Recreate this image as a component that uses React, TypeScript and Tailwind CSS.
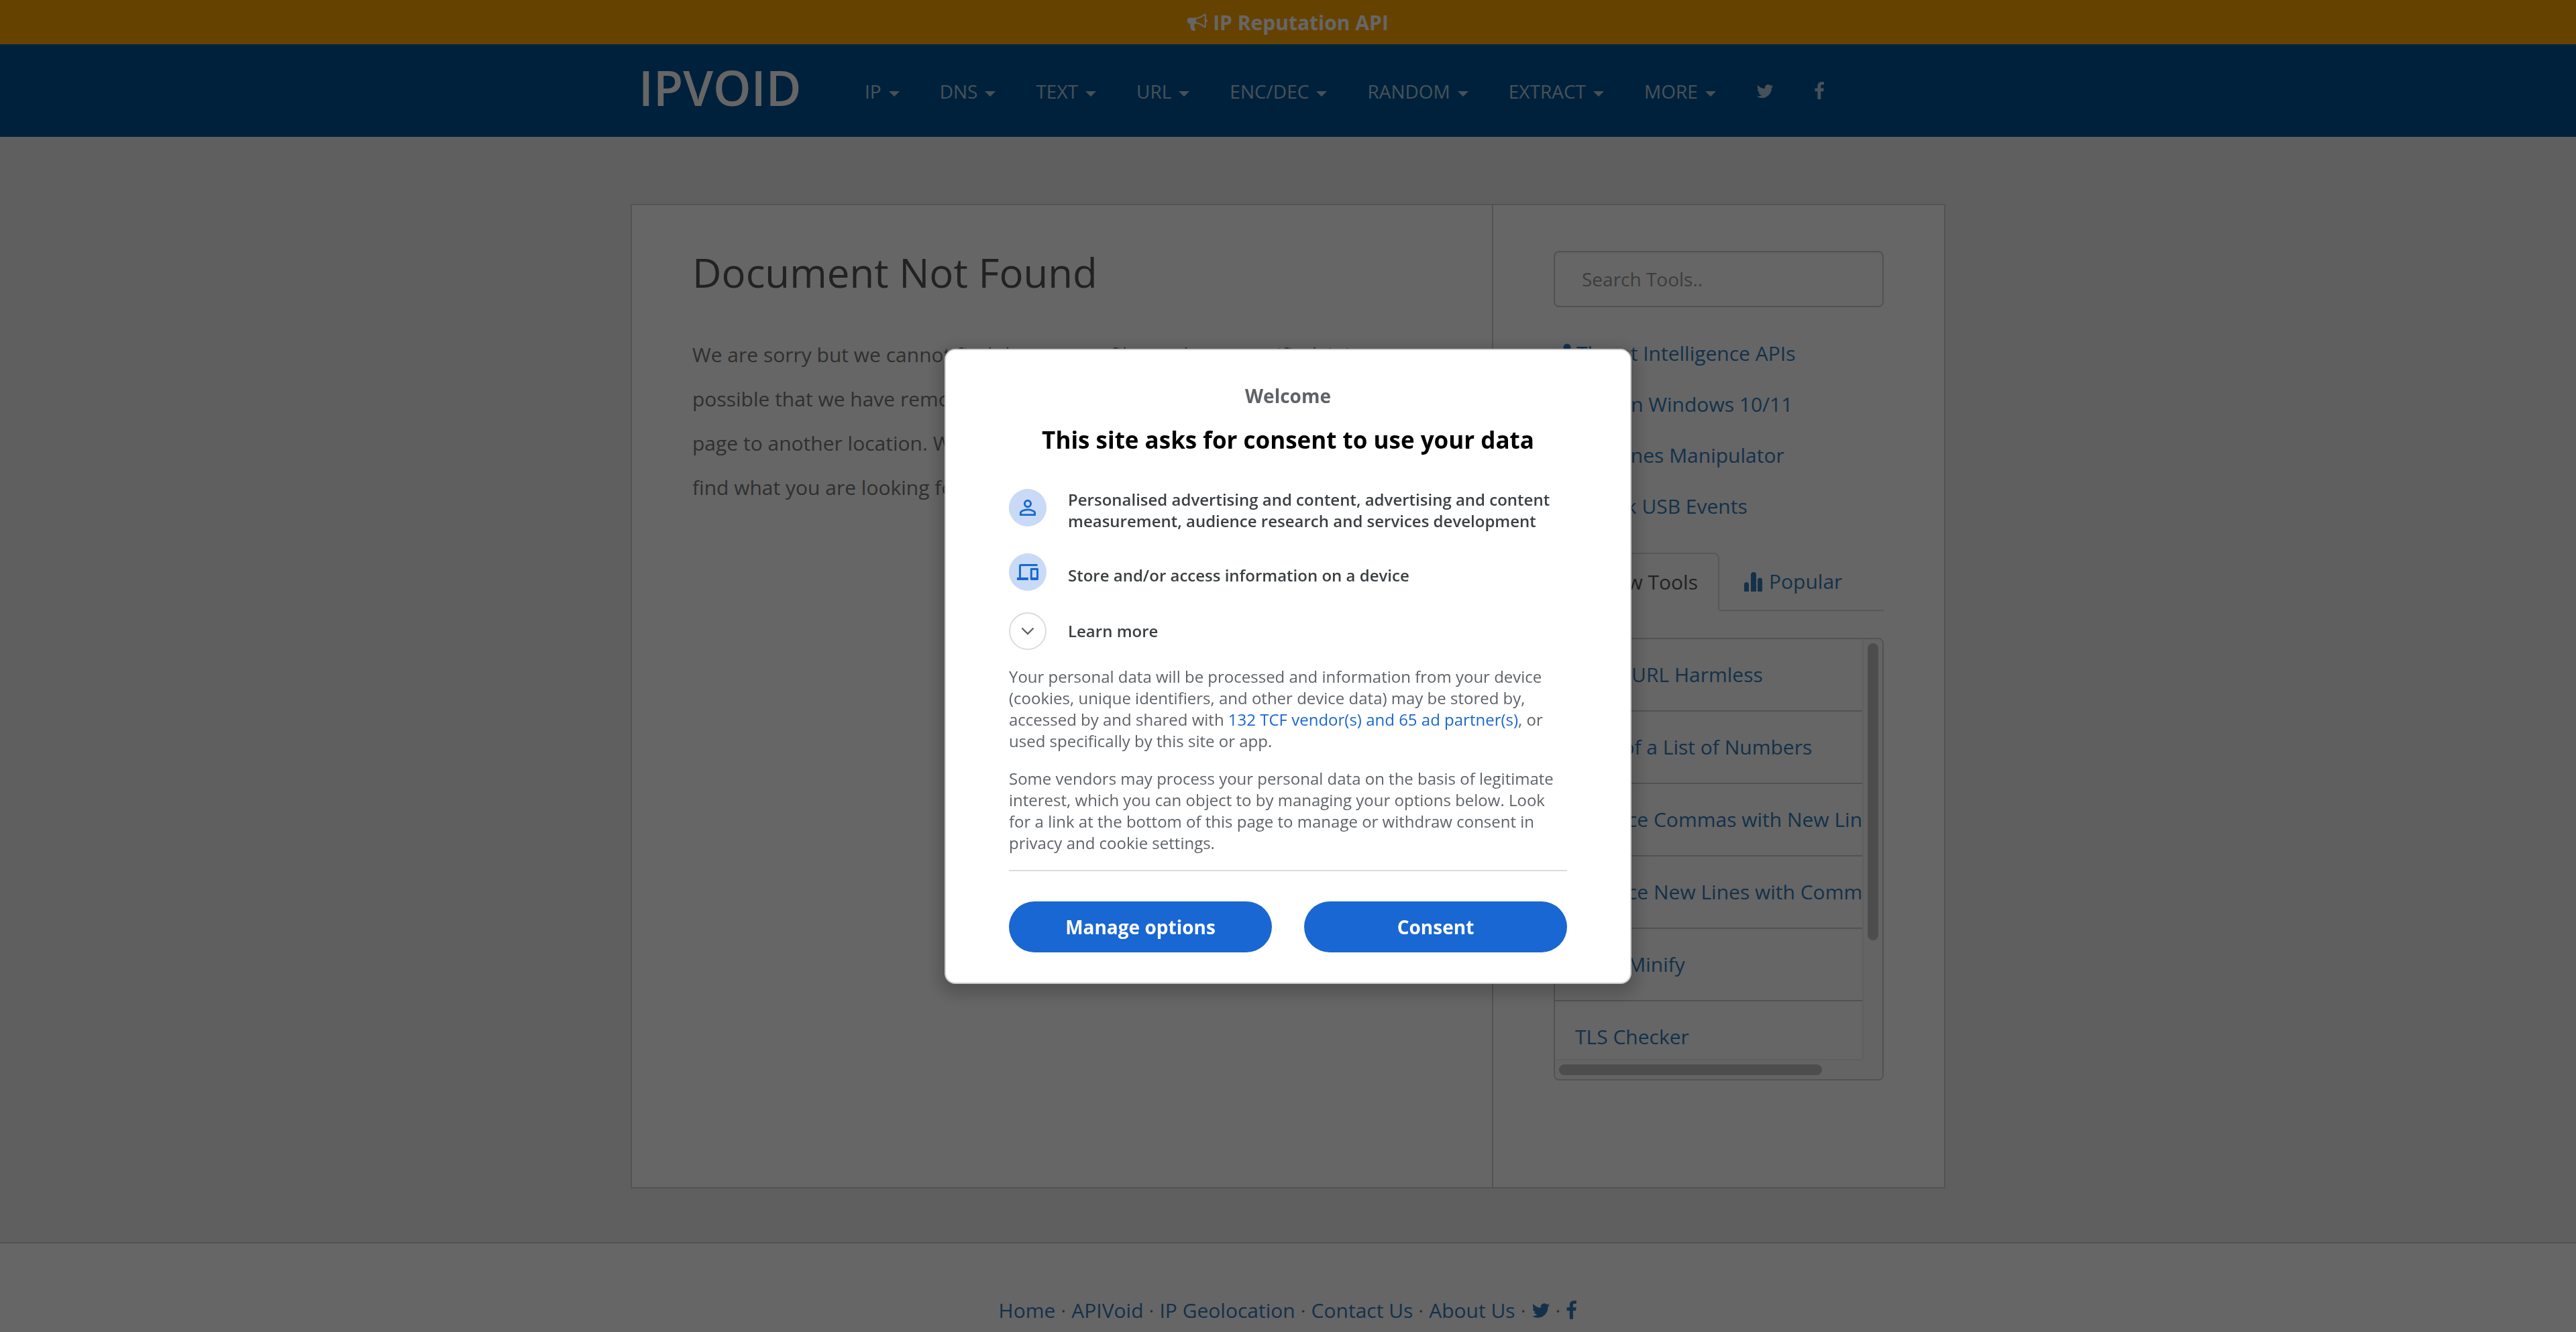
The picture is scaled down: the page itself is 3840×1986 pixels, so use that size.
import React from "react";

const nav = ["IP", "DNS", "TEXT", "URL", "ENC/DEC", "RANDOM", "EXTRACT", "MORE"];
const featured = [
  { label: "Run on Windows 10/11", gap: "ml-[34px]" },
  { label: "Text Lines Manipulator", gap: "ml-6" },
  { label: "Track USB Events", gap: "ml-12" },
];
const tools = [
  "Make URL Harmless",
  "Sum of a List of Numbers",
  "Replace Commas with New Lines",
  "Replace New Lines with Commas",
  "JSON Minify",
  "TLS Checker",
];
const footerLinks = ["Home", "APIVoid", "IP Geolocation", "Contact Us", "About Us"];

function Bullhorn() {
  return (
    <svg viewBox="0 0 1792 1792" className="size-[30px]" fill="currentColor" aria-hidden="true">
      <path d="M1664 640q53 0 90.500 37.500t37.500 90.500-37.500 90.500-90.500 37.500v384q0 52-38 90t-90 38q-417-347-812-380-58 19-91 66t-31 100.500 40 92.500q-20 33-23 65.500t6 58 33.500 55 48 50 61.500 50.500q-29 58-111.500 83t-168.500 11.500-132-55.500q-7-23-29.500-87.500t-32-94.500-23-89-15-101 3.500-98.500 22-110.500h-122q-66 0-113-47t-47-113v-192q0-66 47-113t113-47h480q435 0 896-384 52 0 90 38t38 90v384zm-128 604v-954q-394 302-768 343v270q377 42 768 341z" />
    </svg>
  );
}

function Twitter({ className }: { className: string }) {
  return (
    <svg viewBox="64 0 1664 1792" className={className} fill="currentColor" aria-hidden="true">
      <path d="M1684 408q-67 98-162 167 1 14 1 42 0 130-38 259.500t-115.500 248.500-184.500 210.500-258 146-323 54.500q-271 0-496-145 35 4 78 4 225 0 401-138-105-2-188-64.500t-114-159.500q33 5 61 5 43 0 85-11-112-23-185.500-111.500t-73.500-205.500v-4q68 38 146 41-66-44-105-115t-39-154q0-88 44-163 121 149 294.500 238.500t371.500 99.500q-8-38-8-74 0-134 94.500-228.500t228.500-94.500q140 0 236 102 109-21 205-78-37 115-142 178 93-10 186-50z" />
    </svg>
  );
}

function Facebook({ className }: { className: string }) {
  return (
    <svg viewBox="384 0 1024 1792" className={className} fill="currentColor" aria-hidden="true">
      <path d="M1343 12v264h-157q-86 0-116 36t-30 108v189h293l-39 296h-254v759h-306v-759h-255v-296h255v-218q0-186 104-288.500t277-102.500q147 0 228 12z" />
    </svg>
  );
}

function Pin() {
  return (
    <svg viewBox="0 0 26 30" className="inline h-[30px] w-[26px]" fill="currentColor" aria-hidden="true">
      <circle cx="20" cy="6" r="5.500" />
      <path d="M19 11h2v16l-1 3-1-3z" />
    </svg>
  );
}

function Bars() {
  return (
    <svg viewBox="0 0 32 30" className="h-[30px] w-8" fill="currentColor" aria-hidden="true">
      <path d="M3 30V19.500a3.500 3.500 0 0 1 7 0V30zM13 30V5a3.500 3.500 0 0 1 8 0v25zM23 30V13a3.500 3.500 0 0 1 7 0v17z" />
    </svg>
  );
}

function Plus() {
  return (
    <svg viewBox="0 0 30 30" className="size-[30px]" fill="none" stroke="currentColor" strokeWidth="4" aria-hidden="true">
      <path d="M15 4v22M4 15h22" />
    </svg>
  );
}

function Person() {
  return (
    <svg viewBox="0 0 24 24" className="size-9" fill="currentColor" aria-hidden="true">
      <path d="M12 5.900a2.100 2.100 0 1 1 0 4.200 2.100 2.100 0 0 1 0-4.200m0 9c2.970 0 6.100 1.460 6.100 2.100v1.100H5.900V17c0-.64 3.130-2.100 6.100-2.100M12 4C9.790 4 8 5.790 8 8s1.790 4 4 4 4-1.790 4-4-1.790-4-4-4zm0 9c-2.670 0-8 1.340-8 4v3h16v-3c0-2.660-5.330-4-8-4z" />
    </svg>
  );
}

function Devices() {
  return (
    <svg viewBox="0 0 21.5 16" className="h-6 w-8" fill="currentColor" fillRule="evenodd" aria-hidden="true">
      <path d="M0 13.300h2V2a2 2 0 0 1 2-2h16.500v2H4v11.300h7.300V16H0z" />
      <path d="M14.300 4h6.200a1 1 0 0 1 1 1v10a1 1 0 0 1-1 1h-6.200a1 1 0 0 1-1-1V5a1 1 0 0 1 1-1zm1 2v7.300h4.200V6z" />
    </svg>
  );
}

function Chevron() {
  return (
    <svg viewBox="0 0 20 12" className="h-3 w-5" fill="none" stroke="#5f6368" strokeWidth="2.400" aria-hidden="true">
      <path d="M1.500 1.500 10 10l8.500-8.500" />
    </svg>
  );
}

export default function App() {
  return (
    <div className="min-h-screen bg-[#eee] font-['Open_Sans',sans-serif] text-[28px] text-[#777]">
      <a href="#" className="flex h-[66px] items-center justify-center gap-2 bg-[#ffa500] text-[30px] font-bold text-white">
        <Bullhorn />
        IP Reputation API
      </a>
      <header className="border-t-2 border-[#00639f] bg-[#005397]">
        <div className="mx-auto flex h-[136px] w-full max-w-[1960px] items-center">
          <a href="#" className="ml-3 w-[307px] pb-3 text-[72px] leading-none font-semibold text-white">
            IPVOID
          </a>
          <nav className="flex items-center text-[#b0ccdc]">
            {nav.map((n) => (
              <a key={n} href="#" className="flex items-center gap-[11px] px-[30px]">
                {n}
                <span className="mt-2 border-x-8 border-t-8 border-x-transparent border-t-current" />
              </a>
            ))}
            <a href="#" aria-label="Twitter" className="px-[30px]">
              <Twitter className="h-7 w-[26px]" />
            </a>
            <a href="#" aria-label="Facebook" className="px-[30px]">
              <Facebook className="h-7 w-4" />
            </a>
          </nav>
        </div>
      </header>

      <main className="mx-auto mt-[100px] flex min-h-[1468px] w-full max-w-[1960px] border-2 border-[#d0d0d0] bg-white">
        <section className="flex-1 px-[90px] pt-[58px]">
          <h1 className="text-[60px] leading-[84px] text-[#555]">Document Not Found</h1>
          <p className="mt-12 text-[30px] leading-[66px]">
            We are sorry but we cannot find the page or file you have specified, it is
            <br />
            possible that we have removed the page from our website, or moved the
            <br />
            page to another location. We hope that the links on this page help you to
            <br />
            find what you are looking for.
          </p>
        </section>

        <aside className="w-[674px] border-l-2 border-[#d0d0d0] px-[90px] pt-[68px] text-[30px] text-[#337ab7]">
          <input
            aria-label="Search tools"
            placeholder="Search Tools.."
            className="h-[84px] w-full rounded-lg border-2 border-[#ccc] px-10 text-[28px] shadow-inner placeholder:text-[#999]"
          />
          <ul className="mt-[31px] leading-[76px]">
            <li>
              <a href="#" className="flex items-center gap-2">
                <Pin />
                Threat Intelligence APIs
              </a>
            </li>
            {featured.map((f) => (
              <li key={f.label}>
                <a href="#" className={f.gap}>
                  {f.label}
                </a>
              </li>
            ))}
          </ul>

          <div role="tablist" className="mt-[31px] flex border-b-2 border-[#ddd]">
            <button
              role="tab"
              aria-selected="true"
              className="-mb-0.5 flex h-[87px] items-center gap-2 rounded-t-lg border-2 border-[#ddd] border-b-white bg-white px-[30px] text-[#555]"
            >
              <Plus />
              New Tools
            </button>
            <button role="tab" aria-selected="false" className="ml-1 flex items-center gap-2 px-[30px]">
              <Bars />
              Popular
            </button>
          </div>

          <div className="mt-10 grid h-[660px] grid-cols-[minmax(0,1fr)_30px] grid-rows-[minmax(0,1fr)_30px] overflow-hidden rounded-lg border-2 border-[#ccc]">
            <ul className="overflow-hidden whitespace-nowrap">
              {tools.map((t) => (
                <li key={t} className="flex h-[108px] items-center border-b-2 border-[#ccc] px-[30px] pb-0.5">
                  <a href="#">{t}</a>
                </li>
              ))}
            </ul>
            <div className="border-l-2 border-[#ededed] bg-[#fafafa] px-1.5 pt-1.5">
              <div className="h-[443px] rounded-full bg-[#c1c1c1]" />
            </div>
            <div className="border-t-2 border-[#ededed] bg-[#fafafa] px-1.5 pt-1.5">
              <div className="h-4 w-[392px] rounded-full bg-[#c1c1c1]" />
            </div>
            <div className="bg-[#fafafa]" />
          </div>
        </aside>
      </main>

      <footer className="mt-20 flex items-center justify-center gap-2 border-t-2 border-[#ccc] bg-white pt-20 pb-10 text-[30px] leading-10 text-[#337ab7]">
        {footerLinks.map((f) => (
          <React.Fragment key={f}>
            <a href="#">{f}</a>
            <span className="text-[#777]">·</span>
          </React.Fragment>
        ))}
        <a href="#" aria-label="Twitter">
          <Twitter className="h-[30px] w-7" />
        </a>
        <span className="text-[#777]">·</span>
        <a href="#" aria-label="Facebook">
          <Facebook className="h-[30px] w-[17px]" />
        </a>
      </footer>

      <div className="fixed inset-0 z-10 flex items-center justify-center bg-black/60">
        <div
          role="dialog"
          aria-modal="true"
          aria-labelledby="consent-title"
          className="w-[1024px] rounded-2xl border-2 border-[#ccc] bg-white px-[94px] pt-12 pb-[45px] text-[24px] leading-8 text-[#5f6368] shadow-[0_8px_24px_8px_rgba(0,0,0,0.2)]"
        >
          <p className="text-center text-[28px] leading-10 font-bold">Welcome</p>
          <h2 id="consent-title" className="mt-[22px] text-center text-[35px] leading-[48px] font-bold text-black">
            This site asks for consent to use your data
          </h2>

          <ul className="mt-[49px] flex flex-col gap-8 font-semibold text-[#3c4043]">
            <li className="flex gap-8">
              <span className="flex size-14 shrink-0 items-center justify-center rounded-full bg-[#c8daf5] text-[#1967d2]">
                <Person />
              </span>
              <span>Personalised advertising and content, advertising and content measurement, audience research and services development</span>
            </li>
            <li className="flex gap-8">
              <span className="flex size-14 shrink-0 items-center justify-center rounded-full bg-[#c8daf5] text-[#1967d2]">
                <Devices />
              </span>
              <span className="pt-[17px]">Store and/or access information on a device</span>
            </li>
            <li>
              <button className="flex items-center gap-8">
                <span className="flex size-14 shrink-0 items-center justify-center rounded-full border-2 border-[#dadce0]">
                  <Chevron />
                </span>
                Learn more
              </button>
            </li>
          </ul>

          <p className="mt-6">
            Your personal data will be processed and information from your device (cookies, unique identifiers, and other
            device data) may be stored by, accessed by and shared with{" "}
            <a href="#" className="font-medium text-[#1967d2]">
              132 TCF vendor(s) and 65 ad partner(s)
            </a>
            , or used specifically by this site or app.
          </p>
          <p className="mt-6">
            Some vendors may process your personal data on the basis of legitimate interest, which you can object to by
            managing your options below. Look for a link at the bottom of this page to manage or withdraw consent in
            privacy and cookie settings.
          </p>

          <div className="mt-6 flex gap-12 border-t-2 border-[#dadce0] pt-[45px] text-[28px] font-bold text-white">
            <button className="h-[76px] flex-1 rounded-full bg-[#1967d2]">Manage options</button>
            <button className="h-[76px] flex-1 rounded-full bg-[#1967d2]">Consent</button>
          </div>
        </div>
      </div>
    </div>
  );
}
